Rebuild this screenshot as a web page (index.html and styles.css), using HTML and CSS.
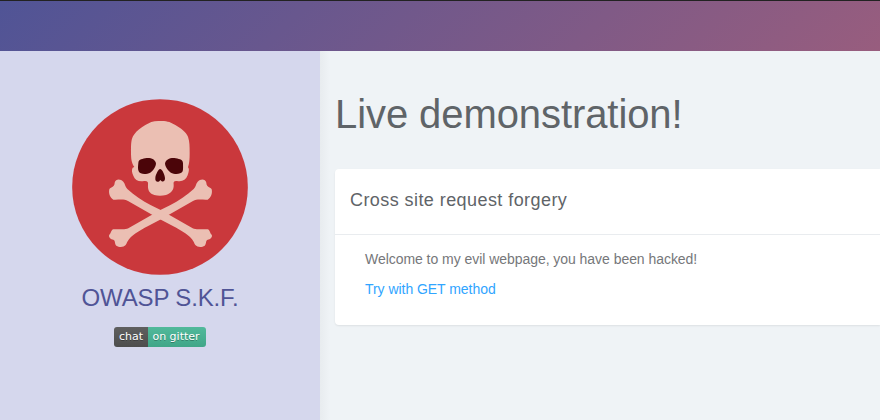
FILE: index.html
```html
<!DOCTYPE html>
<html lang="en">
<head>
<meta charset="utf-8">
<title>Live demonstration!</title>
<link rel="stylesheet" href="styles.css">
</head>
<body>
<header class="topbar"></header>
<div class="layout">
  <aside class="sidebar">
    <svg class="logo" viewBox="36 27 528 528" aria-hidden="true">
      <circle cx="300" cy="291" r="263.5" fill="#ca383c"/>
      <g fill="#ebbfb3">
        <path d="M300 93C322 92 333 97 346 105C362 114 378 126 384 140C389 155 389 169 389 190C389 208 388 220 384 232C389 237 386 247 383 256C377 271 366 276 351 273C341 272 340 276 341 284C342 299 334 309 318 315C306 318 294 318 283 315C267 309 263 300 264 284C265 276 263 272 252 273C236 276 225 270 220 257C215 247 215 238 218 233L223 231C214 218 213 205 213 185C213 163 213 145 222 134C230 122 244 112 256 105C269 97 281 92 300 93Z"/>
        <path id="bone" d="M164 278C167 266 181 265 190 275C196 282 195 290 202 297C222 315 247 332 273 346L302 360L398 415C410 421 428 416 443 418C450 420 449 429 455 434C459 440 450 449 443 449C436 452 440 461 434 467C425 473 412 472 406 465C402 460 402 455 396 448C381 430 360 420 340 409L300 388L204 333C192 326 176 330 160 329C150 324 145 309 148 298C151 290 164 293 164 278Z"/>
        <use href="#bone" transform="matrix(-1 0 0 1 603 0)"/>
      </g>
      <g fill="#4b0509">
        <path d="M235 219C236 206 248 207 260 204C273 203 287 208 288 221C286 234 276 248 262 251C250 253 239 251 236 244C233 237 234 229 235 219Z"/>
        <path d="M369 219C368 206 355 207 343 204C330 203 316 209 315 221C317 234 328 248 341 251C352 253 364 251 368 244C370 237 369 229 369 219Z"/>
        <path d="M300 237C306 236 315 255 315 265C315 274 309 277 304 273L301 270L298 274C291 278 285 274 286 264C287 253 295 238 300 237Z"/>
      </g>
    </svg>
    <div class="brand">OWASP S.K.F.</div>
    <div class="badge"><span class="badge-label">chat</span><span class="badge-value">on gitter</span></div>
  </aside>
  <main class="content">
    <h1>Live demonstration!</h1>
    <section class="card">
      <h2>Cross site request forgery</h2>
      <div class="card-body">
        <p>Welcome to my evil webpage, you have been hacked!</p>
        <a href="#">Try with GET method</a>
      </div>
    </section>
  </main>
</div>
</body>
</html>
```
FILE: styles.css
```css
* { box-sizing: border-box; }
body {
  margin: 0;
  height: 420px;
  overflow: hidden;
  background: #eff3f6;
  font-family: "Liberation Sans", Arial, sans-serif;
  font-size: 14px;
  color: #76777a;
}
.topbar {
  height: 51px;
  border-top: 1px solid #222;
  background: linear-gradient(135deg, #505496 0%, #985d7e 100%);
}
.layout { display: flex; height: 369px; }
.sidebar {
  width: 320px;
  flex: none;
  display: flex;
  flex-direction: column;
  align-items: center;
  padding-top: 48px;
  background: #d5d7ed;
}
.logo { display: block; width: 176px; height: 176px; }
.brand {
  margin-top: 8px;
  font-size: 24px;
  line-height: 30px;
  letter-spacing: -0.15px;
  color: #505496;
}
.badge {
  display: flex;
  width: 92px;
  height: 20px;
  margin-top: 14px;
  border-radius: 3px;
  overflow: hidden;
  font: 11px/20px "DejaVu Sans", sans-serif;
  text-align: center;
  color: #fff;
  text-shadow: 0 1px rgba(1, 1, 1, 0.3);
}
.badge-label { width: 34px; background: linear-gradient(#5f5f5f, #4d4d4d); }
.badge-value {
  width: 58px;
  padding-right: 2px;
  white-space: nowrap;
  background: linear-gradient(#51b99b, #40a688);
}
.content {
  flex: 1;
  min-width: 0;
  padding: 39px 0 0 15px;
  background: linear-gradient(90deg, #e8ecef, #eff3f6 10px);
}
h1 {
  margin: 0;
  font-size: 40px;
  line-height: 48px;
  font-weight: 400;
  letter-spacing: -0.08px;
  white-space: nowrap;
  color: #5f6468;
}
.card {
  height: 156px;
  margin-top: 31px;
  border-radius: 4px 0 0 4px;
  background: #fff;
  box-shadow: 0 1px 2px rgba(0, 0, 0, 0.08);
}
h2 {
  margin: 0;
  height: 66px;
  padding: 20px 15px;
  border-bottom: 1px solid #e9ecef;
  font-size: 18px;
  line-height: 22px;
  font-weight: 400;
  letter-spacing: 0.43px;
  color: #5f6468;
}
.card-body { padding: 14px 30px; line-height: 20px; letter-spacing: -0.045px; }
p { margin: 0 0 10px; }
a { color: #30a5ff; text-decoration: none; }
```
